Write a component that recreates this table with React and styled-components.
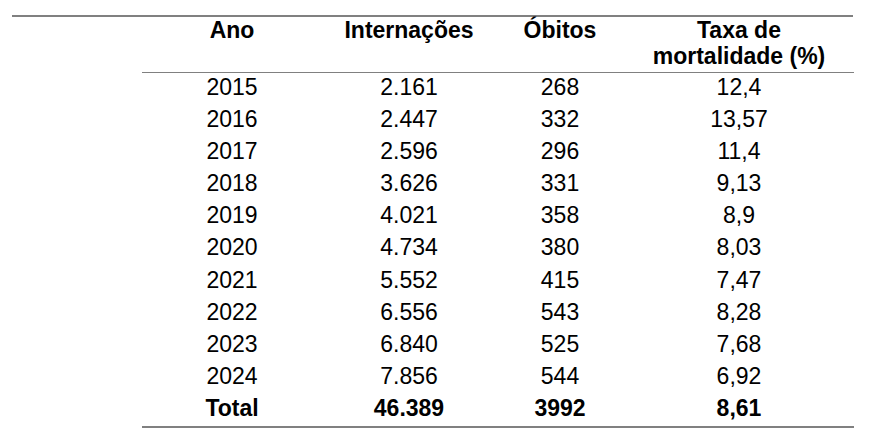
import React from "react";
import styled, { createGlobalStyle } from "styled-components";

const GlobalStyle = createGlobalStyle`
  html, body {
    margin: 0;
    padding: 0;
    background: #ffffff;
  }
  body {
    font-family: "Liberation Sans", Arial, sans-serif;
    color: #000000;
  }
`;

const Page = styled.div`
  width: 878px;
  height: 445px;
  padding: 15px 0 0 12px;
  box-sizing: border-box;
`;

const TopRule = styled.div`
  width: 841px;
  border-top: 2px solid #808080;
`;

const Table = styled.div`
  margin-left: 130px;
  width: 712px;
  display: grid;
  grid-template-columns: 180px 174px 128px 230px;
  border-bottom: 2px solid #808080;
`;

const HeadCell = styled.div`
  font-size: 23px;
  font-weight: 700;
  line-height: 26px;
  text-align: center;
  padding: 0 0 3px;
  border-bottom: 1px solid #808080;
`;

const Cell = styled.div`
  font-size: 23px;
  font-weight: ${(p) => (p.$bold ? 700 : 400)};
  line-height: 28.5px;
  height: 32.1px;
  box-sizing: border-box;
  padding-bottom: 3.6px;
  text-align: center;
`;

const headers = ["Ano", "Internações", "Óbitos", "Taxa de\nmortalidade (%)"];

const rows = [
  ["2015", "2.161", "268", "12,4"],
  ["2016", "2.447", "332", "13,57"],
  ["2017", "2.596", "296", "11,4"],
  ["2018", "3.626", "331", "9,13"],
  ["2019", "4.021", "358", "8,9"],
  ["2020", "4.734", "380", "8,03"],
  ["2021", "5.552", "415", "7,47"],
  ["2022", "6.556", "543", "8,28"],
  ["2023", "6.840", "525", "7,68"],
  ["2024", "7.856", "544", "6,92"],
];

const total = ["Total", "46.389", "3992", "8,61"];

export default function App() {
  return (
    <>
      <GlobalStyle />
      <Page>
        <TopRule />
        <Table>
          {headers.map((h) => (
            <HeadCell key={h}>
              {h.split("\n").map((line, i) => (
                <div key={i}>{line}</div>
              ))}
            </HeadCell>
          ))}
          {rows.map((r) =>
            r.map((v, i) => <Cell key={r[0] + i}>{v}</Cell>)
          )}
          {total.map((v, i) => (
            <Cell key={"t" + i} $bold>
              {v}
            </Cell>
          ))}
        </Table>
      </Page>
    </>
  );
}
